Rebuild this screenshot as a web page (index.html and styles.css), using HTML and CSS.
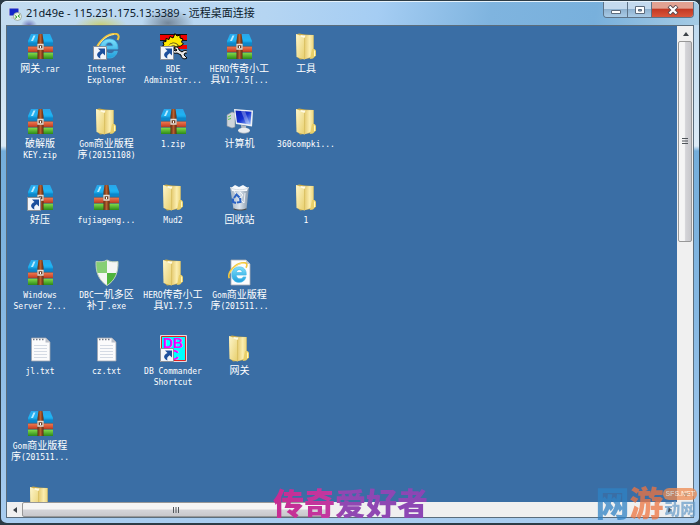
FILE: index.html
```html
<!DOCTYPE html>
<html lang="zh-CN">
<head>
    <meta charset="UTF-8">
    <meta name="viewport" content="width=device-width, initial-scale=1.0">
    <title>远程桌面连接</title>
    <link rel="stylesheet" href="styles.css">
</head>
<body>
    <svg class="defs" aria-hidden="true">
        <defs>
            <linearGradient id="g-blue" x1="0" y1="0" x2="0" y2="1">
                <stop offset="0" stop-color="#2aa5e8"/><stop offset=".5" stop-color="#1fb4f4"/><stop offset="1" stop-color="#0a78b8"/>
            </linearGradient>
            <linearGradient id="g-red" x1="0" y1="0" x2="0" y2="1">
                <stop offset="0" stop-color="#f07a50"/><stop offset="1" stop-color="#c23a20"/>
            </linearGradient>
            <linearGradient id="g-green" x1="0" y1="0" x2="0" y2="1">
                <stop offset="0" stop-color="#86de4c"/><stop offset="1" stop-color="#2c8a18"/>
            </linearGradient>
            <linearGradient id="g-belt" x1="0" y1="0" x2="1" y2="0">
                <stop offset="0" stop-color="#5a2c14"/><stop offset=".5" stop-color="#b86030"/><stop offset="1" stop-color="#5a2810"/>
            </linearGradient>
            <linearGradient id="g-fold" x1="0" y1="0" x2="1" y2="0">
                <stop offset="0" stop-color="#e3c76a"/><stop offset=".6" stop-color="#fbeeb0"/><stop offset="1" stop-color="#ecd57c"/>
            </linearGradient>
            <linearGradient id="g-fold2" x1="0" y1="0" x2="1" y2="1">
                <stop offset="0" stop-color="#fdf6cc"/><stop offset="1" stop-color="#e8cf6c"/>
            </linearGradient>
            <linearGradient id="g-ie" x1="0" y1="0" x2="0" y2="1">
                <stop offset="0" stop-color="#7fe0fb"/><stop offset="1" stop-color="#1f9fdc"/>
            </linearGradient>
            <linearGradient id="g-screen" x1="0" y1="0" x2="1" y2="1">
                <stop offset="0" stop-color="#0a1cb0"/><stop offset=".5" stop-color="#1430d0"/><stop offset="1" stop-color="#9cc4ff"/>
            </linearGradient>
            <linearGradient id="g-bin" x1="0" y1="0" x2="1" y2="0">
                <stop offset="0" stop-color="#a8b4c0"/><stop offset=".5" stop-color="#eef3f8"/><stop offset="1" stop-color="#8b98a6"/>
            </linearGradient>
        </defs>
        <symbol id="arrow" viewBox="0 0 27 27">
            <path d="M0.5 13.5h13v13h-13z" fill="#f2f5fa" stroke="#8a8f98"/>
            <path d="M5 15.500h7v7l-2.300-2.300c-2.500 1.500-3 3-2.200 5.300-4.500-2-4.500-5.500 0-7.500z" fill="#1c4f9c"/>
        </symbol>
        <symbol id="archive" viewBox="0 0 27 27">
            <path d="M4 1h19l3 7v5H1V8z" fill="url(#g-blue)"/>
            <path d="M1 9.500h25V13H1z" fill="#0c86ca"/>
            <path d="M6.500 2.500h2L6 8H4z" fill="#b6eaff"/>
            <path d="M1 13.500h25V19H1z" fill="url(#g-red)"/>
            <path d="M1 19.500h25V26H1z" fill="url(#g-green)"/>
            <path d="M1 13.200h25M1 19.200h25" stroke="#5a5048" stroke-width=".5"/>
            <path d="M11.500 1h4l1 7v18h-6V8z" fill="url(#g-belt)"/>
            <path d="M11 11.500h5v4.500h-5z" fill="#6d4028" stroke="#e4dcd4" stroke-width="1.300"/>
            <path d="M13.500 13v2" stroke="#fff"/>
        </symbol>
        <symbol id="folder" viewBox="0 0 27 27">
            <path d="M3 1.500l3-1 6 1 8.500.5v20l-1.500 3-12 1.500-3-3z" fill="#c9ab4c"/>
            <path d="M11 2.200l9.500-.2v21l-9.500 3.500z" fill="url(#g-fold)"/>
            <path d="M3 1l8.500 3v22.500L3.500 24z" fill="url(#g-fold2)"/>
            <path d="M11.500 4v22" stroke="#d6bb5c" stroke-width=".7"/>
            <path d="M7.500 2v1.500l4 1.500 1-2.500z" fill="#fffbe2"/>
            <path d="M19 16l2.500 0 1.500 1.500v5l-3 3-3 .5z" fill="#e9cf68"/>
            <path d="M21.500 17.500v5.500" stroke="#fff6c2"/>
        </symbol>
        <symbol id="ie" viewBox="0 0 27 27">
            <path d="M24.800 16H12.500c.3 3 2 4.600 4.600 4.600 2 0 3.300-.8 4-2.300h3.300c-1.200 4.500-4 6.700-8.200 6.700-5.500 0-9-3.800-9-9.500C7.200 9.500 11 6 16.300 6c5.700 0 8.900 3.900 8.500 10zM12.700 13h7.300c-.3-2.400-1.600-3.600-3.700-3.600s-3.300 1.200-3.600 3.600z" fill="url(#g-ie)" stroke="#3fb8ea" stroke-width=".8"/>
            <path d="M4 20C1 13 12 1 22 .800c4 0 4.500 3 2.500 6.200" fill="none" stroke="#f2c63c" stroke-width="2"/>
            <path d="M5 14C8 7 15 2 21 1.500" fill="none" stroke="#fff0a0" stroke-width=".8"/>
        </symbol>
        <symbol id="bde" viewBox="0 0 27 27">
            <path d="M0 2h28v5H0zM14 12h14v4H14z" fill="#f00000"/>
            <path d="M0 7.500h28M0 1.500h28" stroke="#111"/>
            <path d="M3 16l-2-2 3-2-1-3 3-.5 0-3 3 1 1-3 3 1.500L15 .500l2 2.500 3-1 0 3 3 1-1.500 3 2 2-3 2z" fill="#ffe800" stroke="#000"/>
            <path d="M8 16c0-8 9-8 11-3l-4 4z" fill="#5a5010"/>
            <path d="M8 17c1-6 6-7 9-4" fill="none" stroke="#ffee30" stroke-width="2"/>
            <path d="M14 15c2-2 5-1 5 2l3 2c3-3 6-1 6 1l-3 0-1 2 2 2 1 1c-3 2-6 0-6-3l-4-2c-3 1-5-1-4-3l3 1 1-1z" fill="#e8e8e8" stroke="#000"/>
        </symbol>
        <symbol id="computer" viewBox="0 0 27 27">
            <path d="M1 7l5-3 3 1v14l-3 1-5-2z" fill="#cfd4da" stroke="#8d949c" stroke-width=".6"/>
            <path d="M2 9l3-1.500M2 11.500l3-1" stroke="#5fc84c"/>
            <path d="M8 1l19 1.500-1 16L10 16z" fill="#eef1f5"/>
            <path d="M9.500 2.500l16 1.200-1 12.800-13.500-2z" fill="url(#g-screen)"/>
            <path d="M15 3l4 .3 5 13-4-.6z" fill="#fff" opacity=".3"/>
            <path d="M15 17l5 1 .5 4h-5z" fill="#b4bac2"/>
            <ellipse cx="18" cy="22.500" rx="6" ry="2.800" fill="#e9ecf0"/>
            <path d="M12 23c2 3 10 3 12 0" fill="none" stroke="#9aa2aa" stroke-width=".7"/>
        </symbol>
        <symbol id="bin" viewBox="0 0 27 27">
            <path d="M4 3h19l-2.500 22c-2 1.500-11 1.500-13 0z" fill="url(#g-bin)" opacity=".9"/>
            <path d="M5 4l4-3 4 2 4-2 5 3-1 3H6z" fill="#f6f9fc"/>
            <path d="M4 3.500c4 3 15 3 19 0" fill="none" stroke="#d4dbe2"/>
            <path d="M14 8l3 3-3 4 4 4M19 9l-1 10M8 7l2 3" stroke="#fff" fill="none" opacity=".8"/>
            <path d="M8 14l2.500-3.500 3 3M14 14l.5 4-3.500.500M10 19l-3-1 0-3.500" fill="none" stroke="#2a62c4" stroke-width="2"/>
            <path d="M7.500 24c3 2 10 2 13 0l-.3 1.800c-3 1-9 1-12.400 0z" fill="#4c4a48"/>
        </symbol>
        <symbol id="shield" viewBox="0 0 27 27">
            <path d="M14 1c3 2 7 2 11 1.500.5 11-3 19-11 24C6 21.500 2.500 13.500 3 2.500 7 3 11 3 14 1z" fill="#f4f6f4"/>
            <path d="M14 1v13H4C3 10 3 6 3 2.500 7 3 11 3 14 1z" fill="#86cf74"/>
            <path d="M14 14h9.700c-1.700 5.500-5 9.500-9.700 12.500z" fill="#4fb43c"/>
            <path d="M14 1c3 2 7 2 11 1.500.5 11-3 19-11 24C6 21.500 2.500 13.500 3 2.500 7 3 11 3 14 1z" fill="none" stroke="#b9cdb8"/>
        </symbol>
        <symbol id="page" viewBox="0 0 27 27">
            <path d="M5 1h15l4 4v21H5z" fill="#fcfcfd" stroke="#a9adb4" stroke-width=".8"/>
            <path d="M20 1v4h4z" fill="#c3c8d0"/>
        </symbol>
        <symbol id="text" viewBox="0 0 27 27">
            <path d="M4.500 3h14.500l4 4v19h-18.500z" fill="#fbfbfc" stroke="#a0a5ae" stroke-width=".8"/>
            <path d="M18.500 3v4.500H23z" fill="#b9bec8"/>
            <path d="M6 4.500h11" stroke="#757b86" stroke-width="1.500" stroke-dasharray="1.500 1.500"/>
            <path d="M7 10.500h13M7 13.500h13M7 16.500h13M7 19.500h13M7 22.500h13" stroke="#d4dae4"/>
        </symbol>
    </svg>

    <div class="window">
        <header class="titlebar">
            <svg class="app-icon" viewBox="0 0 14 14" aria-hidden="true">
                <path d="M1 1h10v8H1z" fill="#1426c8" stroke="#d5dbe6"/>
                <path d="M3 10h5v2H3z" fill="#c9ced8"/>
                <circle cx="9.500" cy="9.500" r="4" fill="#e9f3e6" stroke="#8b958a" stroke-width=".7"/>
                <path d="M7 8.500l2 1.500-2 1.500M12 7.500L10 9l2 1.500" fill="none" stroke="#37a42c"/>
            </svg>
            <h1>21d49e - 115.231.175.13:3389 - 远程桌面连接</h1>
            <div class="controls">
                <button type="button" class="ctl" aria-label="最小化"><svg viewBox="0 0 12 10"><path d="M1.500 5.500h9v3h-9z" fill="#fff" stroke="#5c6b7c"/></svg></button>
                <button type="button" class="ctl" aria-label="最大化"><svg viewBox="0 0 12 10"><path d="M1.500 1.500h9v7h-9z" fill="#fff" stroke="#5c6b7c"/><path d="M4.500 4.500h3v1.500h-3z" fill="#7fa3c6" stroke="#5c6b7c"/></svg></button>
                <button type="button" class="ctl close" aria-label="关闭"><svg viewBox="0 0 12 10"><path d="M2 1l8 8M10 1L2 9" stroke="#5b4a50" stroke-width="4"/><path d="M2.500 1.500l7 7M9.500 1.500l-7 7" stroke="#fff" stroke-width="2.200"/></svg></button>
            </div>
        </header>

        <main class="screen">
            <div class="desktop">
                <ul>
                    <li><a href="#"><svg><use href="#archive"/></svg><span>网关<i>.rar</i></span></a></li>
                    <li><a href="#"><svg><use href="#archive"/></svg><span>破解版<br><i>KEY.zip</i></span></a></li>
                    <li><a href="#"><svg><use href="#archive"/><use href="#arrow"/></svg><span>好压</span></a></li>
                    <li><a href="#"><svg><use href="#archive"/></svg><span><i>Windows</i><br><i>Server 2...</i></span></a></li>
                    <li><a href="#"><svg><use href="#text"/></svg><span><i>jl.txt</i></span></a></li>
                    <li><a href="#"><svg><use href="#archive"/></svg><span><i>Gom</i>商业版程<br>序<i>(201511...</i></span></a></li>
                    <li><a href="#" aria-label="文件夹"><svg><use href="#folder"/></svg></a></li>
                </ul>
                <ul>
                    <li><a href="#"><svg><use href="#ie"/><use href="#arrow"/></svg><span><i>Internet</i><br><i>Explorer</i></span></a></li>
                    <li><a href="#"><svg><use href="#folder"/></svg><span><i>Gom</i>商业版程<br>序<i>(20151108)</i></span></a></li>
                    <li><a href="#"><svg><use href="#archive"/></svg><span><i>fujiageng...</i></span></a></li>
                    <li><a href="#"><svg><use href="#shield"/></svg><span><i>DBC</i>一机多区<br>补丁<i>.exe</i></span></a></li>
                    <li><a href="#"><svg><use href="#text"/></svg><span><i>cz.txt</i></span></a></li>
                </ul>
                <ul>
                    <li><a href="#"><svg><use href="#bde"/><use href="#arrow"/></svg><span><i>BDE</i><br><i>Administr...</i></span></a></li>
                    <li><a href="#"><svg><use href="#archive"/></svg><span><i>1.zip</i></span></a></li>
                    <li><a href="#"><svg><use href="#folder"/></svg><span><i>Mud2</i></span></a></li>
                    <li><a href="#"><svg><use href="#folder"/></svg><span><i>HERO</i>传奇小工<br>具<i>V1.7.5</i></span></a></li>
                    <li><a href="#"><svg viewBox="0 0 27 27"><path d="M.500.500h26v26H.500z" fill="#0ff" stroke="#e8d8dc"/><path d="M1.500 1.500h24v24h-24z" fill="none" stroke="#e02020"/><text class="dbc" x="3" y="13">DB</text><text class="dbc" x="9" y="25">C</text><use href="#arrow"/></svg><span><i>DB Commander</i><br><i>Shortcut</i></span></a></li>
                </ul>
                <ul>
                    <li><a href="#"><svg><use href="#archive"/></svg><span><i>HERO</i>传奇小工<br>具<i>V1.7.5[...</i></span></a></li>
                    <li><a href="#"><svg><use href="#computer"/></svg><span>计算机</span></a></li>
                    <li><a href="#"><svg><use href="#bin"/></svg><span>回收站</span></a></li>
                    <li><a href="#"><svg viewBox="0 0 27 27"><use href="#page"/><use href="#ie" x="0" y="3" width="22" height="22"/></svg><span><i>Gom</i>商业版程<br>序<i>(201511...</i></span></a></li>
                    <li><a href="#"><svg><use href="#folder"/></svg><span>网关</span></a></li>
                </ul>
                <ul>
                    <li><a href="#"><svg><use href="#folder"/></svg><span>工具</span></a></li>
                    <li><a href="#"><svg><use href="#folder"/></svg><span><i>360compki...</i></span></a></li>
                    <li><a href="#"><svg><use href="#folder"/></svg><span><i>1</i></span></a></li>
                </ul>
            </div>

            <div class="scroll vertical">
                <button type="button" aria-label="向上滚动"><svg viewBox="0 0 8 8"><path d="M4 2l3 4H1z"/></svg></button>
                <div class="track"><div class="thumb"><svg viewBox="0 0 8 8"><path d="M1 1.500h6M1 4h6M1 6.500h6"/></svg></div></div>
                <button type="button" aria-label="向下滚动"><svg viewBox="0 0 8 8"><path d="M4 6l3-4H1z"/></svg></button>
            </div>
            <div class="scroll horizontal">
                <button type="button" aria-label="向左滚动"><svg viewBox="0 0 8 8"><path d="M2 4l4-3v6z"/></svg></button>
                <div class="track"><div class="thumb"><svg viewBox="0 0 8 8"><path d="M1.500 1v6M4 1v6M6.500 1v6"/></svg></div></div>
                <button type="button" aria-label="向右滚动"><svg viewBox="0 0 8 8"><path d="M6 4L2 1v6z"/></svg></button>
            </div>
        </main>

        <p class="mark fans">传奇爱好者</p>
        <div class="mark site">
            <span class="wang">网</span><span class="you">游</span>
            <div class="side"><span class="badge">SFS.NET</span><span class="dong">动网</span></div>
        </div>
    </div>
</body>
</html>
```
FILE: styles.css
```css
* {
    margin: 0;
    padding: 0;
    box-sizing: border-box;
}
body {
    background-color: #2b3a44;
    font-family: "Noto Sans", "Noto Sans CJK SC", sans-serif;
}
.defs {
    position: absolute;
    width: 0;
    height: 0;
}
.window {
    position: relative;
    height: 100vh;
    padding: 0 5px 5px;
    display: flex;
    flex-direction: column;
    background: linear-gradient(#b9d7ee, #dcebf6 145px, #74aedb 150px, #86b8e2 60%, #a9cdf0);
    border: 1px solid #2d3c46;
    border-bottom-width: 2px;
    border-radius: 7px;
}
.titlebar {
    display: flex;
    align-items: flex-start;
    gap: 4px;
    height: 24px;
    margin: 0 -5px;
    padding-left: 7px;
    border-top: 1px solid #e6f2fb;
    border-radius: 6px 6px 0 0;
    /* blurred desktop showing through the glass */
    background:
        radial-gradient(ellipse 8px 6px at 28px 23px, #7079bc, transparent),
        radial-gradient(ellipse 26px 9px at 100px 23px, #c8cf78, transparent),
        radial-gradient(ellipse 26px 14px at 167px 21px, #74879a, transparent),
        linear-gradient(100deg, #c3dcf0, #b5d5f2 38%, #a5cdf3 54%, #7fb4df 70%, #78b0dc 85%, #a5cbe4);
}
.app-icon {
    width: 14px;
    height: 14px;
    margin-top: 5px;
}
h1 {
    flex: 1;
    font-size: 11px;
    font-weight: 400;
    line-height: 22px;
    color: #0b1a2c;
    white-space: nowrap;
}
.controls {
    display: flex;
    height: 16px;
    margin-right: 5px;
    border: 1px solid #5d7388;
    border-top: none;
    border-radius: 0 0 4px 4px;
    overflow: hidden;
}
.ctl {
    width: 24px;
    border: none;
    border-right: 1px solid #5d7388;
    background: linear-gradient(#c4daee 45%, #8fb2d0 50%, #a9cbe6);
}
.ctl svg {
    display: block;
    width: 12px;
    height: 10px;
    margin: 0 auto;
}
.close {
    width: 41px;
    border-right: none;
    background: linear-gradient(#e2a292 40%, #c43a24 50%, #d9563a);
}
.screen {
    flex: 1;
    min-height: 0;
    display: grid;
    grid-template-columns: 1fr 16px;
    grid-template-rows: 1fr 15px;
    background-color: #f0f0f0;
    border: 1px solid #5b6d7c;
}
.desktop {
    display: flex;
    min-height: 0;
    padding-top: 7px;
    overflow: hidden;
    background-color: #3a6ea5;
}
.desktop ul {
    display: grid;
    grid-auto-rows: 75px 76px;
    align-content: start;
    width: 66px;
    list-style: none;
}
.desktop ul:nth-child(even) {
    width: 67px;
}
.desktop a {
    display: flex;
    flex-direction: column;
    align-items: center;
    gap: 2px;
    color: #fff;
    text-decoration: none;
}
.desktop svg {
    width: 27px;
    height: 27px;
}
.desktop span {
    font-family: "Noto Sans CJK SC", sans-serif;
    font-size: 10px;
    line-height: 11px;
    text-align: center;
    white-space: nowrap;
}
.desktop i {
    font-family: "DejaVu Sans Mono", monospace;
    font-size: 8px;
    font-style: normal;
    line-height: 1px;
}
.dbc {
    font: bold 14px "Liberation Sans", sans-serif;
    fill: #f0f;
}
.scroll {
    display: flex;
}
.scroll button {
    flex: none;
    width: 15px;
    height: 15px;
    border: none;
    background: none;
}
.scroll svg {
    display: block;
    width: 8px;
    height: 8px;
    margin: auto;
    fill: #3c4248;
    stroke: none;
}
.track {
    flex: 1;
}
.thumb {
    display: flex;
    border: 1px solid #989898;
    border-radius: 2px;
}
.scroll .thumb svg {
    stroke: #50555a;
}
.vertical {
    flex-direction: column;
    padding: 0 1px;
}
.vertical .thumb {
    height: 45%;
    background: linear-gradient(90deg, #f5f5f5 45%, #d4d4d8 55%, #c8c8cc);
}
.horizontal .thumb {
    width: 48%;
    height: 15px;
    background: linear-gradient(#f5f5f5 45%, #d4d4d8 55%, #c8c8cc);
}
/* logos printed over the bottom edge */
.mark {
    position: absolute;
    font-family: "Noto Sans CJK SC", sans-serif;
    font-weight: 900;
    white-space: nowrap;
}
.fans {
    bottom: 5px;
    left: 272px;
    font-size: 31px;
    line-height: 32px;
    color: transparent;
    background: linear-gradient(90deg, #c72c92, #c238a0 38%, #9148b2 45%, #8c46b4);
    background-clip: text;
    -webkit-background-clip: text;
}
.site {
    bottom: 4px;
    right: 2px;
    display: flex;
    align-items: center;
    font-size: 34px;
    line-height: 34px;
    opacity: .75;
}
.wang {
    color: #2f82c4;
}
.you {
    color: #ee7440;
}
.side {
    display: flex;
    flex-direction: column;
    align-items: center;
}
.badge {
    padding: 0 2px;
    border-radius: 6px;
    background-color: #ee8a50;
    color: #ffe3c8;
    font: bold 7px/12px "Liberation Sans", sans-serif;
}
.dong {
    font-size: 16px;
    line-height: 17px;
    color: #6d9fca;
}
```
